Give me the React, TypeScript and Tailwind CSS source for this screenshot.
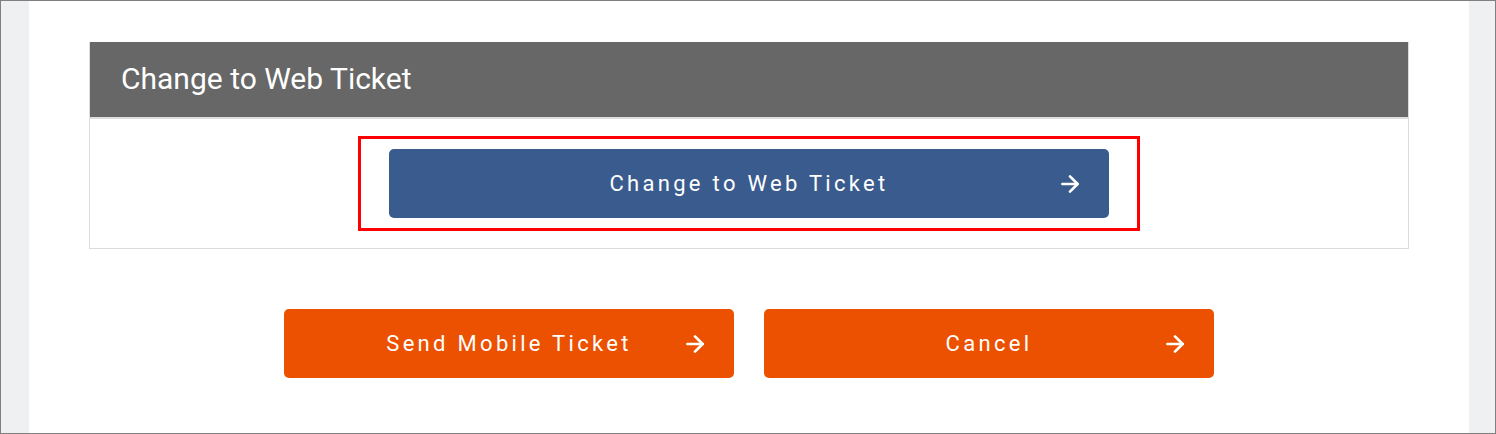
import { ArrowRight } from "lucide-react";

function ActionButton({ label, color, className }: { label: string; color: string; className?: string }) {
  return (
    <button
      type="button"
      className={`relative flex h-[69px] items-center justify-center rounded-[5px] text-[22px] tracking-[3.3px] text-white ${color} ${className ?? ""}`}
    >
      <span>{label}</span>
      <ArrowRight className="absolute right-[26px] top-1/2 -translate-y-1/2" size={26} strokeWidth={2.5} />
    </button>
  );
}

export default function App() {
  return (
    <div className="flex h-[434px] w-[1496px] border border-[#7f7f7f] bg-[#eff0f2] font-['Roboto',sans-serif]">
      <div className="ml-[28px] w-[1440px] bg-white pt-[41px]">
        <div className="mx-[60px] border-x border-b border-[#dcdcdc]">
          <div className="flex h-[77px] items-center border-b-2 border-[#dedede] bg-[#666766] pb-[2px] pl-[31px]">
            <h2 className="text-[30px] text-white">Change to Web Ticket</h2>
          </div>
          <div className="flex justify-center pb-[17px] pt-[17px]">
            <div className="border-[3px] border-[#ff0000] px-[28px] py-[10px]">
              <ActionButton label="Change to Web Ticket" color="bg-[#3a5b8d]" className="w-[720px]" />
            </div>
          </div>
        </div>
        <div className="mt-[60px] flex justify-center gap-[30px]">
          <ActionButton label="Send Mobile Ticket" color="bg-[#eb5100]" className="w-[450px]" />
          <ActionButton label="Cancel" color="bg-[#eb5100]" className="w-[450px]" />
        </div>
      </div>
    </div>
  );
}
